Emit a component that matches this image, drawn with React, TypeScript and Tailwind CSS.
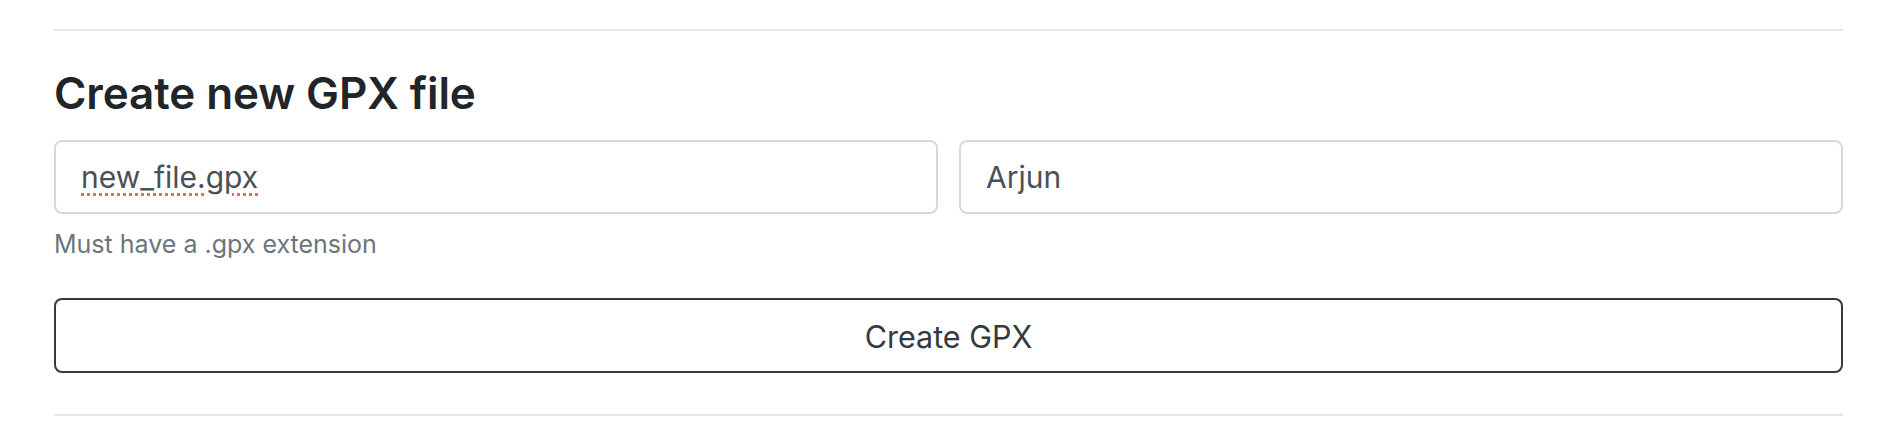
export default function App() {
  return (
    <div className="h-[448px] w-full bg-white font-['Inter',sans-serif]">
      <div className="ml-[54px] mr-[61px] pt-[29px]">
        <div className="h-[2px] w-full bg-[#e5e6e7]" />
        <h2 className="mt-[36px] text-[44px] font-semibold leading-[52px] tracking-[-0.1px] text-[#212529]">
          Create new GPX file
        </h2>
        <div className="mt-[21px] grid grid-cols-2 gap-[21px]">
          {/* spell-check squiggle is part of the picture, so the value is drawn in a span */}
          <div
            role="textbox"
            tabIndex={0}
            className="flex h-[74px] items-center rounded-[8px] border-2 border-[#d5d9dd] bg-white px-[25px] text-[30px] leading-none text-[#495057] outline-none"
          >
            <span className="underline decoration-[#f0665a] decoration-dotted decoration-[2.5px] underline-offset-[5px]">
              new_file.gpx
            </span>
          </div>
          <input
            type="text"
            defaultValue="Arjun"
            className="h-[74px] rounded-[8px] border-2 border-[#d5d9dd] bg-white px-[25px] text-[30px] text-[#495057] outline-none"
          />
        </div>
        <p className="mt-[12px] text-[25px] leading-[36px] text-[#6c757d]">
          Must have a .gpx extension
        </p>
        <button
          type="button"
          className="mt-[36px] h-[75px] w-full rounded-[8px] border-[2px] border-[#343a40] bg-white pt-[2px] text-[30.5px] text-[#343a40]"
        >
          Create GPX
        </button>
        <div className="mt-[41px] h-[2px] w-full bg-[#e5e6e7]" />
      </div>
    </div>
  );
}
